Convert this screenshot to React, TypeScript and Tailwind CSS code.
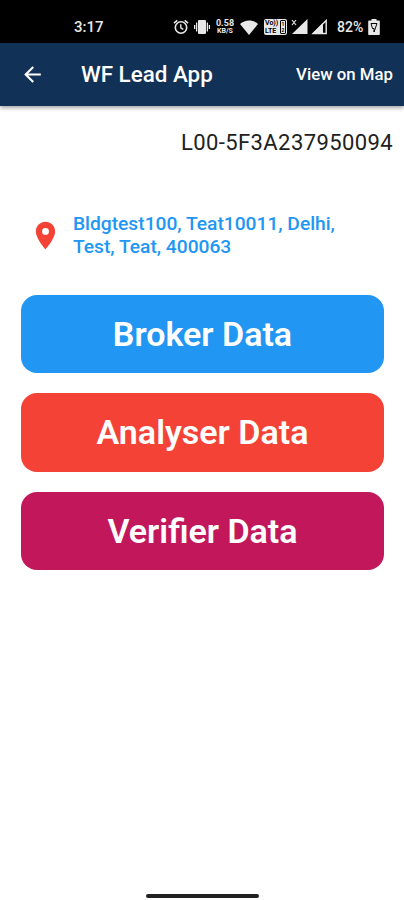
import { MdArrowBack, MdLocationOn } from "react-icons/md";

type LeadSection = {
  label: string;
  color: string;
};

// The sections of a lead, one large button for each
const sections: LeadSection[] = [
  { label: "Broker Data", color: "bg-[#2196f3]" },
  { label: "Analyser Data", color: "bg-[#f44336]" },
  { label: "Verifier Data", color: "bg-[#c2185b]" },
];

function StatusBar() {
  return (
    <div className="flex h-[42.5px] shrink-0 items-center bg-black pt-3 pl-[74px] text-[#e8e8e8]">
      <span className="w-[99px] text-[15px] leading-none font-medium">3:17</span>
      {/* Alarm */}
      <svg width="16" height="16" viewBox="0 0 16 16" className="shrink-0" fill="none" stroke="currentColor">
        <circle cx="8" cy="8.5" r="5.7" strokeWidth="1.6" />
        <path d="M1 4.200 4.300 1.300M15 4.200l-3.300-2.900" strokeWidth="1.6" />
        <path d="M7.800 5.300v3.500l2.500 1.600" strokeWidth="1.4" />
      </svg>
      {/* Vibrate */}
      <svg width="16" height="16" viewBox="0 0 16 16" className="ml-[5px] shrink-0" fill="currentColor">
        <rect x="4" y="1" width="8" height="14" rx="1" />
        <path d="M2 3.500h1.300v9H2zM0 6h1.300v4H0zM12.700 3.500H14v9h-1.300zM14.700 6H16v4h-1.300z" />
      </svg>
      {/* Network speed */}
      <div className="ml-[5px] flex w-5 shrink-0 flex-col items-center font-bold">
        <span className="text-[9px] leading-[9px]">0.58</span>
        <span className="text-[7px] leading-[7px]">KB/S</span>
      </div>
      <svg width="18" height="15" viewBox="0 0 18 15" className="ml-[5px] shrink-0" fill="currentColor">
        <path d="M0 4C5-.7 13-.7 18 4L9 15z" />
      </svg>
      {/* VoLTE badge */}
      <div className="ml-[6px] flex h-4 w-[23px] shrink-0 rounded-[2px] bg-[#e8e8e8] pl-px text-black">
        <div className="flex w-[15px] flex-col justify-center font-bold">
          <span className="text-[7px] leading-[8px]">Vo))</span>
          <span className="text-[7px] leading-[8px]">LTE</span>
        </div>
        <div className="my-px flex w-[6px] flex-col items-center rounded-[1px] border border-black font-bold">
          <span className="text-[5px] leading-[6px]">1</span>
          <span className="text-[5px] leading-[6px]">2</span>
        </div>
      </div>
      {/* Signal of both SIM cards */}
      <svg width="17" height="16" viewBox="0 0 17 16" className="ml-1 shrink-0" fill="currentColor">
        <path d="M16.500 0v15H1z" />
        <path d="m1 1 4 5M5 1 1 6" stroke="currentColor" strokeWidth="1.2" />
      </svg>
      <svg width="17" height="16" viewBox="0 0 17 16" className="ml-[3px] shrink-0" fill="none">
        <path d="M15.200 1.500v13H2z" stroke="currentColor" strokeWidth="1.4" />
        <path d="M12 4v11H1z" fill="currentColor" />
      </svg>
      <span className="ml-[9px] w-[31px] text-[14px] leading-none font-medium">82%</span>
      <svg width="12" height="16" viewBox="0 0 12 16" className="shrink-0">
        <path d="M3.500 0h5v1.500H11a.8.8 0 0 1 .8.8v12.900a.8.8 0 0 1-.8.8H1a.8.8 0 0 1-.8-.8V2.300a.8.8 0 0 1 .8-.8h2.500z" fill="currentColor" />
        <path d="M3 4.500h6L6 13V9.500H4.500z" fill="none" stroke="#000" strokeWidth="1" />
      </svg>
    </div>
  );
}

export default function App() {
  return (
    <main className="flex h-[900px] w-[404px] flex-col overflow-hidden bg-white font-['Roboto',sans-serif]">
      <StatusBar />
      <header className="flex h-[63px] shrink-0 items-center bg-[#123156] pt-px pr-[11px] pl-[20px] text-white shadow-[0_2px_4px_rgba(0,0,0,0.35)]">
        <button aria-label="Back">
          <MdArrowBack size={25} />
        </button>
        <h1 className="ml-[36px] text-[22.4px] font-medium">WF Lead App</h1>
        <button className="ml-auto text-[16.8px] font-medium">View on Map</button>
      </header>

      <p className="mt-[24.5px] pr-[11px] text-right text-[22px] leading-[26px] tracking-[0.4px] text-[#212121]">
        L00-5F3A237950094
      </p>

      {/* Property address */}
      <div className="mt-[56px] flex items-center pl-[29px]">
        <MdLocationOn size={33} className="shrink-0 text-[#f44336]" />
        <p className="ml-[11px] text-[19.2px] leading-[23px] font-medium text-[#2196f3]">
          Bldgtest100, Teat10011, Delhi,
          <br />
          Test, Teat, 400063
        </p>
      </div>

      <div className="mt-[36.5px] flex flex-col gap-5 pr-5 pl-[21px]">
        {sections.map((s) => (
          <button
            key={s.label}
            className={`h-[78.5px] rounded-[16px] pt-px text-[34px] font-semibold text-white ${s.color}`}
          >
            {s.label}
          </button>
        ))}
      </div>

      {/* Gesture bar */}
      <div className="mt-auto mb-[2px] ml-[146px] h-[4px] w-[113px] rounded-full bg-[#222222]" />
    </main>
  );
}
